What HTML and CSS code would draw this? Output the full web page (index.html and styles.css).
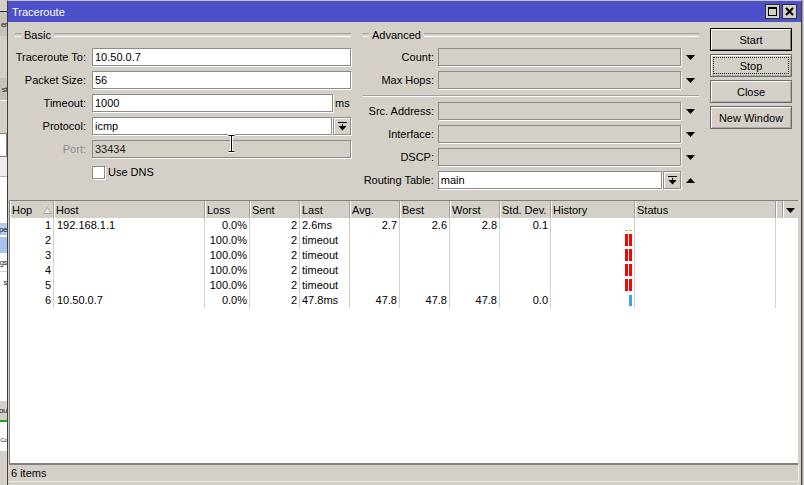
FILE: index.html
```html
<!DOCTYPE html>
<html lang="en">
<head>
    <meta charset="UTF-8">
    <title>Traceroute</title>
    <link rel="stylesheet" href="styles.css">
</head>
<body>
<div class="desktop">
    <div class="side-left">
        <div class="bg b1"></div>
        <div class="bg b2"><span>er</span></div>
        <div class="bg b3"></div>
        <div class="bg b4"><span>st</span></div>
        <div class="bg b5"></div>
        <div class="bg b6"></div>
        <div class="bg b7"></div>
        <div class="bg b8"></div>
        <div class="bg b9"><span>pe</span></div>
        <div class="bg b10"></div>
        <div class="bg b11"><span>gs</span></div>
        <div class="bg b12"><span>s</span></div>
        <div class="bg b13"></div>
        <div class="bg b14"><span>ou</span></div>
        <div class="bg b15"></div>
        <div class="bg b16"><span>Co</span></div>
        <div class="bg b17"></div>
    </div>

    <div class="window">
        <div class="titlebar">
            <span class="title">Traceroute</span>
            <div class="title-btns">
                <span class="tbtn">
                    <svg width="13" height="13" viewBox="0 0 13 13"><rect x="2.5" y="2.5" width="8" height="8" fill="none" stroke="#000"/><rect x="2" y="2" width="9" height="2" fill="#000"/></svg>
                </span>
                <span class="tbtn">
                    <svg width="13" height="13" viewBox="0 0 13 13"><path d="M3 3 L10 10 M10 3 L3 10" stroke="#000" stroke-width="2"/></svg>
                </span>
            </div>
        </div>

        <div class="form">
            <div class="group basic">
                <div class="legend"><span>Basic</span></div>
                <div class="rows">
                    <div class="row">
                        <span class="label">Traceroute To:</span>
                        <span class="input w-full">10.50.0.7</span>
                    </div>
                    <div class="row">
                        <span class="label">Packet Size:</span>
                        <span class="input w-full">56</span>
                    </div>
                    <div class="row">
                        <span class="label">Timeout:</span>
                        <span class="input w-unit">1000</span>
                        <span class="unit">ms</span>
                    </div>
                    <div class="row">
                        <span class="label">Protocol:</span>
                        <span class="input w-drop">icmp</span>
                        <span class="drop-btn">
                            <svg width="9" height="9" viewBox="0 0 9 9"><rect x="0" y="0" width="9" height="1"/><rect x="4" y="2" width="1" height="2"/><polygon points="0.5,4 8.5,4 4.5,8.5"/></svg>
                        </span>
                    </div>
                    <div class="row">
                        <span class="label disabled">Port:</span>
                        <span class="input w-full off">33434</span>
                    </div>
                    <div class="row">
                        <span class="label"></span>
                        <span class="checkbox"></span>
                        <span class="check-label">Use DNS</span>
                    </div>
                </div>
                <svg class="cursor" width="9" height="19" viewBox="0 0 9 19">
                    <path d="M1 1 H8 M4.5 1 V18 M1 18 H8" stroke="#fff" stroke-width="3" fill="none"/>
                    <path d="M1.5 1.5 H7.5 M4.5 1.5 V17.5 M1.5 17.5 H7.5" stroke="#000" stroke-width="1" fill="none"/>
                </svg>
            </div>

            <div class="group advanced">
                <div class="legend"><span>Advanced</span></div>
                <div class="rows">
                    <div class="row">
                        <span class="label">Count:</span>
                        <span class="input w-adv off"></span>
                        <span class="arrow"><svg width="9" height="5" viewBox="0 0 9 5"><polygon points="0,0 9,0 4.5,5"/></svg></span>
                    </div>
                    <div class="row">
                        <span class="label">Max Hops:</span>
                        <span class="input w-adv off"></span>
                        <span class="arrow"><svg width="9" height="5" viewBox="0 0 9 5"><polygon points="0,0 9,0 4.5,5"/></svg></span>
                    </div>
                    <div class="sep"></div>
                    <div class="row">
                        <span class="label">Src. Address:</span>
                        <span class="input w-adv off"></span>
                        <span class="arrow"><svg width="9" height="5" viewBox="0 0 9 5"><polygon points="0,0 9,0 4.5,5"/></svg></span>
                    </div>
                    <div class="row">
                        <span class="label">Interface:</span>
                        <span class="input w-adv off"></span>
                        <span class="arrow"><svg width="9" height="5" viewBox="0 0 9 5"><polygon points="0,0 9,0 4.5,5"/></svg></span>
                    </div>
                    <div class="row">
                        <span class="label">DSCP:</span>
                        <span class="input w-adv off"></span>
                        <span class="arrow"><svg width="9" height="5" viewBox="0 0 9 5"><polygon points="0,0 9,0 4.5,5"/></svg></span>
                    </div>
                    <div class="row">
                        <span class="label">Routing Table:</span>
                        <span class="input w-adv-drop">main</span>
                        <span class="drop-btn">
                            <svg width="9" height="9" viewBox="0 0 9 9"><rect x="0" y="0" width="9" height="1"/><rect x="4" y="2" width="1" height="2"/><polygon points="0.5,4 8.5,4 4.5,8.5"/></svg>
                        </span>
                        <span class="arrow"><svg width="9" height="5" viewBox="0 0 9 5"><polygon points="0,5 9,5 4.5,0"/></svg></span>
                    </div>
                </div>
            </div>

            <div class="buttons">
                <button class="btn default">Start</button>
                <button class="btn focus">Stop</button>
                <button class="btn">Close</button>
                <button class="btn">New Window</button>
            </div>
        </div>

        <div class="grid">
            <div class="thead">
                <div class="th c-hop">Hop<svg class="sort" width="9" height="7" viewBox="0 0 9 7"><polygon points="4.5,0.5 8.5,6.5 0.5,6.5" fill="#ececec" stroke="#a8a8a8"/></svg></div>
                <div class="th c-host">Host</div>
                <div class="th c-loss">Loss</div>
                <div class="th c-sent">Sent</div>
                <div class="th c-num">Last</div>
                <div class="th c-num">Avg.</div>
                <div class="th c-num">Best</div>
                <div class="th c-num">Worst</div>
                <div class="th c-std">Std. Dev.</div>
                <div class="th c-hist">History</div>
                <div class="th c-status">Status</div>
                <div class="th c-blank"></div>
                <div class="th c-menu"><svg width="9" height="5" viewBox="0 0 9 5"><polygon points="0,0 9,0 4.5,5"/></svg></div>
            </div>
            <div class="tbody">
                <div class="tr">
                    <div class="td c-hop r">1</div>
                    <div class="td c-host">192.168.1.1</div>
                    <div class="td c-loss r">0.0%</div>
                    <div class="td c-sent r">2</div>
                    <div class="td c-num">2.6ms</div>
                    <div class="td c-num r">2.7</div>
                    <div class="td c-num r">2.6</div>
                    <div class="td c-num r">2.8</div>
                    <div class="td c-std r">0.1</div>
                    <div class="td c-hist"><span class="bar dash"></span><span class="bar dash"></span></div>
                    <div class="td c-status"></div>
                </div>
                <div class="tr">
                    <div class="td c-hop r">2</div>
                    <div class="td c-host"></div>
                    <div class="td c-loss r">100.0%</div>
                    <div class="td c-sent r">2</div>
                    <div class="td c-num">timeout</div>
                    <div class="td c-num"></div>
                    <div class="td c-num"></div>
                    <div class="td c-num"></div>
                    <div class="td c-std"></div>
                    <div class="td c-hist"><span class="bar lost"></span><span class="bar lost"></span></div>
                    <div class="td c-status"></div>
                </div>
                <div class="tr">
                    <div class="td c-hop r">3</div>
                    <div class="td c-host"></div>
                    <div class="td c-loss r">100.0%</div>
                    <div class="td c-sent r">2</div>
                    <div class="td c-num">timeout</div>
                    <div class="td c-num"></div>
                    <div class="td c-num"></div>
                    <div class="td c-num"></div>
                    <div class="td c-std"></div>
                    <div class="td c-hist"><span class="bar lost"></span><span class="bar lost"></span></div>
                    <div class="td c-status"></div>
                </div>
                <div class="tr">
                    <div class="td c-hop r">4</div>
                    <div class="td c-host"></div>
                    <div class="td c-loss r">100.0%</div>
                    <div class="td c-sent r">2</div>
                    <div class="td c-num">timeout</div>
                    <div class="td c-num"></div>
                    <div class="td c-num"></div>
                    <div class="td c-num"></div>
                    <div class="td c-std"></div>
                    <div class="td c-hist"><span class="bar lost"></span><span class="bar lost"></span></div>
                    <div class="td c-status"></div>
                </div>
                <div class="tr">
                    <div class="td c-hop r">5</div>
                    <div class="td c-host"></div>
                    <div class="td c-loss r">100.0%</div>
                    <div class="td c-sent r">2</div>
                    <div class="td c-num">timeout</div>
                    <div class="td c-num"></div>
                    <div class="td c-num"></div>
                    <div class="td c-num"></div>
                    <div class="td c-std"></div>
                    <div class="td c-hist"><span class="bar lost"></span><span class="bar lost"></span></div>
                    <div class="td c-status"></div>
                </div>
                <div class="tr">
                    <div class="td c-hop r">6</div>
                    <div class="td c-host">10.50.0.7</div>
                    <div class="td c-loss r">0.0%</div>
                    <div class="td c-sent r">2</div>
                    <div class="td c-num">47.8ms</div>
                    <div class="td c-num r">47.8</div>
                    <div class="td c-num r">47.8</div>
                    <div class="td c-num r">47.8</div>
                    <div class="td c-std r">0.0</div>
                    <div class="td c-hist"><span class="bar ok"></span></div>
                    <div class="td c-status"></div>
                </div>
            </div>
        </div>

        <div class="statusbar">
            <div class="status-panel">6 items</div>
        </div>
    </div>

    <div class="side-right"></div>
</div>
</body>
</html>
```

FILE: styles.css
```css
* {
    box-sizing: border-box;
}
body {
    margin: 0;
    font-family: "Liberation Sans", Arial, sans-serif;
    font-size: 11px;
    color: #000;
    background: #d4d0c8;
    overflow: hidden;
}
.desktop {
    display: flex;
    width: 804px;
    height: 485px;
}

/* windows behind */
.side-left {
    width: 7px;
    display: flex;
    flex-direction: column;
    overflow: hidden;
}
.bg {
    display: flex;
    justify-content: flex-end;
    align-items: center;
    white-space: nowrap;
    font-size: 8px;
    letter-spacing: -0.5px;
    color: #222;
}
.b1 { height: 12px; border-bottom: 1px solid #202020; }
.b2 { height: 24px; background: #c6c2ba; }
.b3 { height: 42px; }
.b4 { height: 23px; background: #c6c2ba; border-bottom: 1px solid #fff; }
.b5 { height: 32px; }
.b6 { height: 24px; background: #fff; border: 1px solid #808080; border-left: none; }
.b7 { height: 20px; background: #ececec; border-bottom: 1px solid #b0b0b0; }
.b8 { height: 46px; background: #fff; }
.b9 { height: 12px; background: #b8cce8; }
.b10 { height: 18px; background: #a8c4ec; border-top: 2px solid #fff; }
.b11 { height: 18px; background: #fff; }
.b12 { height: 22px; background: #fff; border-top: 1px solid #d0d0d0; }
.b13 { height: 108px; background: #fff; }
.b14 { height: 19px; background: #d4d0c8; }
.b15 { height: 10px; background: #fff; border-top: 2px solid #20a020; }
.b16 { height: 20px; background: #fff; font-size: 6px; }
.b17 { flex: 1; background: #d4d0c8; border-top: 1px solid #fff; }

.side-right {
    width: 2px;
    background: #d4d0c8;
    border-left: 1px solid #a0a0a0;
}

/* window */
.window {
    width: 795px;
    display: flex;
    flex-direction: column;
    background: #d4d0c8;
    border-left: 1px solid #404040;
    border-right: 1px solid #404040;
    border-top: 1px solid #c8c4d4;
}
.titlebar {
    height: 21px;
    display: flex;
    align-items: center;
    padding-left: 4px;
    background: #4c50c9;
}
.title {
    color: #fff;
    font-size: 11px;
}
.title-btns {
    display: flex;
    gap: 2px;
    margin-left: auto;
    margin-right: 4px;
}
.tbtn {
    width: 15px;
    height: 15px;
    display: flex;
    align-items: center;
    justify-content: center;
    background: #d4d0c8;
    border: 1px solid #303030;
}

/* form */
.form {
    height: 178px;
    display: flex;
    padding: 6px 0 0 7px;
}
.group {
    width: 336px;
    position: relative;
}
.advanced {
    margin-left: 12px;
}
.legend {
    height: 13px;
    display: flex;
    align-items: center;
    margin-bottom: 7px;
}
.legend::before,
.legend::after {
    content: "";
    height: 2px;
    border-top: 1px solid #a0a0a0;
    border-bottom: 1px solid #fff;
}
.legend::before {
    width: 6px;
    margin-right: 3px;
}
.legend::after {
    flex: 1;
    margin-left: 3px;
}
.rows {
    display: flex;
    flex-direction: column;
    gap: 5px;
}
.row {
    height: 18px;
    display: flex;
    align-items: center;
}
.label {
    width: 77px;
    padding-right: 6px;
    text-align: right;
    white-space: nowrap;
}
.advanced .label {
    width: 75px;
    padding-right: 4px;
}
.label.disabled {
    color: #8c8c8c;
}
.input {
    height: 18px;
    line-height: 16px;
    padding-left: 2px;
    background: #fff;
    border: 1px solid #8c8c8c;
    box-shadow: 1px 1px 0 #fff;
    white-space: nowrap;
    overflow: hidden;
}
.input.off {
    background: #d4d0c8;
    color: #222;
}
.w-full { width: 259px; }
.w-unit { width: 241px; }
.w-drop { width: 240px; }
.w-adv { width: 243px; }
.w-adv-drop { width: 225px; }
.unit {
    margin-left: 2px;
}
.drop-btn {
    width: 18px;
    height: 18px;
    margin-left: 1px;
    display: flex;
    align-items: center;
    justify-content: center;
    border: 1px solid #8c8c8c;
    box-shadow: inset 1px 1px #fff, 1px 1px 0 #fff;
}
.arrow {
    width: 18px;
    display: flex;
    justify-content: center;
    padding-left: 1px;
}
.checkbox {
    width: 13px;
    height: 13px;
    background: #fff;
    border: 1px solid #8c8c8c;
    box-shadow: 1px 1px 0 #fff;
}
.check-label {
    margin-left: 3px;
}
.sep {
    height: 2px;
    margin-top: 1px;
    border-top: 1px solid #a0a0a0;
    border-bottom: 1px solid #fff;
}
.cursor {
    position: absolute;
    left: 212px;
    top: 106px;
}

/* buttons */
.buttons {
    width: 82px;
    margin-left: 11px;
    display: flex;
    flex-direction: column;
    gap: 3px;
}
.btn {
    height: 23px;
    padding: 0;
    font-family: inherit;
    font-size: 11px;
    color: #000;
    background: #d4d0c8;
    border: 1px solid #6c6c6c;
    box-shadow: inset 1px 1px #fff, inset -1px -1px #a8a8a8;
    position: relative;
}
.btn.default {
    border-color: #000;
    box-shadow: inset 1px 1px #fff, inset -1px -1px #808080;
}
.btn.focus::after {
    content: "";
    position: absolute;
    top: 2px;
    left: 2px;
    right: 2px;
    bottom: 2px;
    border: 1px dotted #000;
}

/* list */
.grid {
    width: 789px;
    height: 265px;
    margin-left: 1px;
    display: flex;
    flex-direction: column;
    background: #fff;
    border-top: 1px solid #808080;
    border-left: 1px solid #808080;
    border-bottom: 2px solid #808080;
}
.thead {
    height: 17px;
    display: flex;
    background: #d4d0c8;
}
.th {
    height: 17px;
    line-height: 17px;
    padding-left: 2px;
    padding-top: 1px;
    border-right: 1px solid #a0a0a0;
    box-shadow: inset 1px 0 #fff;
    white-space: nowrap;
    overflow: hidden;
    display: flex;
    align-items: center;
}
.sort {
    margin-left: auto;
    margin-right: 1px;
}
.tr {
    height: 15px;
    display: flex;
}
.td {
    height: 15px;
    line-height: 15px;
    padding: 0 2px;
    border-right: 1px solid #d4d0c8;
    white-space: nowrap;
    overflow: hidden;
}
.td.r {
    text-align: right;
}
.td.c-host {
    padding-left: 3px;
}
.c-hop { width: 44px; }
.c-host { width: 151px; }
.c-loss { width: 45px; }
.c-sent { width: 50px; }
.c-num { width: 50px; }
.c-std { width: 51px; }
.c-hist { width: 84px; }
.c-status { width: 141px; }
.th.c-blank { width: 7px; }
.th.c-menu {
    width: 15px;
    border-right: none;
    justify-content: center;
    padding-left: 0;
}
.td.c-hist {
    display: flex;
    justify-content: flex-end;
    align-items: flex-end;
    gap: 1px;
    padding: 0 2px 2px 0;
}
.bar {
    width: 3px;
}
.bar.dash {
    height: 1px;
    background: #f2a03a;
}
.bar.lost {
    height: 12px;
    background: #ff0000;
}
.bar.ok {
    height: 11px;
    background: #3aa6dc;
}

/* status bar */
.statusbar {
    height: 20px;
    padding-left: 1px;
}
.status-panel {
    width: 790px;
    height: 17px;
    line-height: 17px;
    padding-left: 2px;
    border-bottom: 1px solid #eeeeee;
    border-right: 1px solid #eeeeee;
}
```
